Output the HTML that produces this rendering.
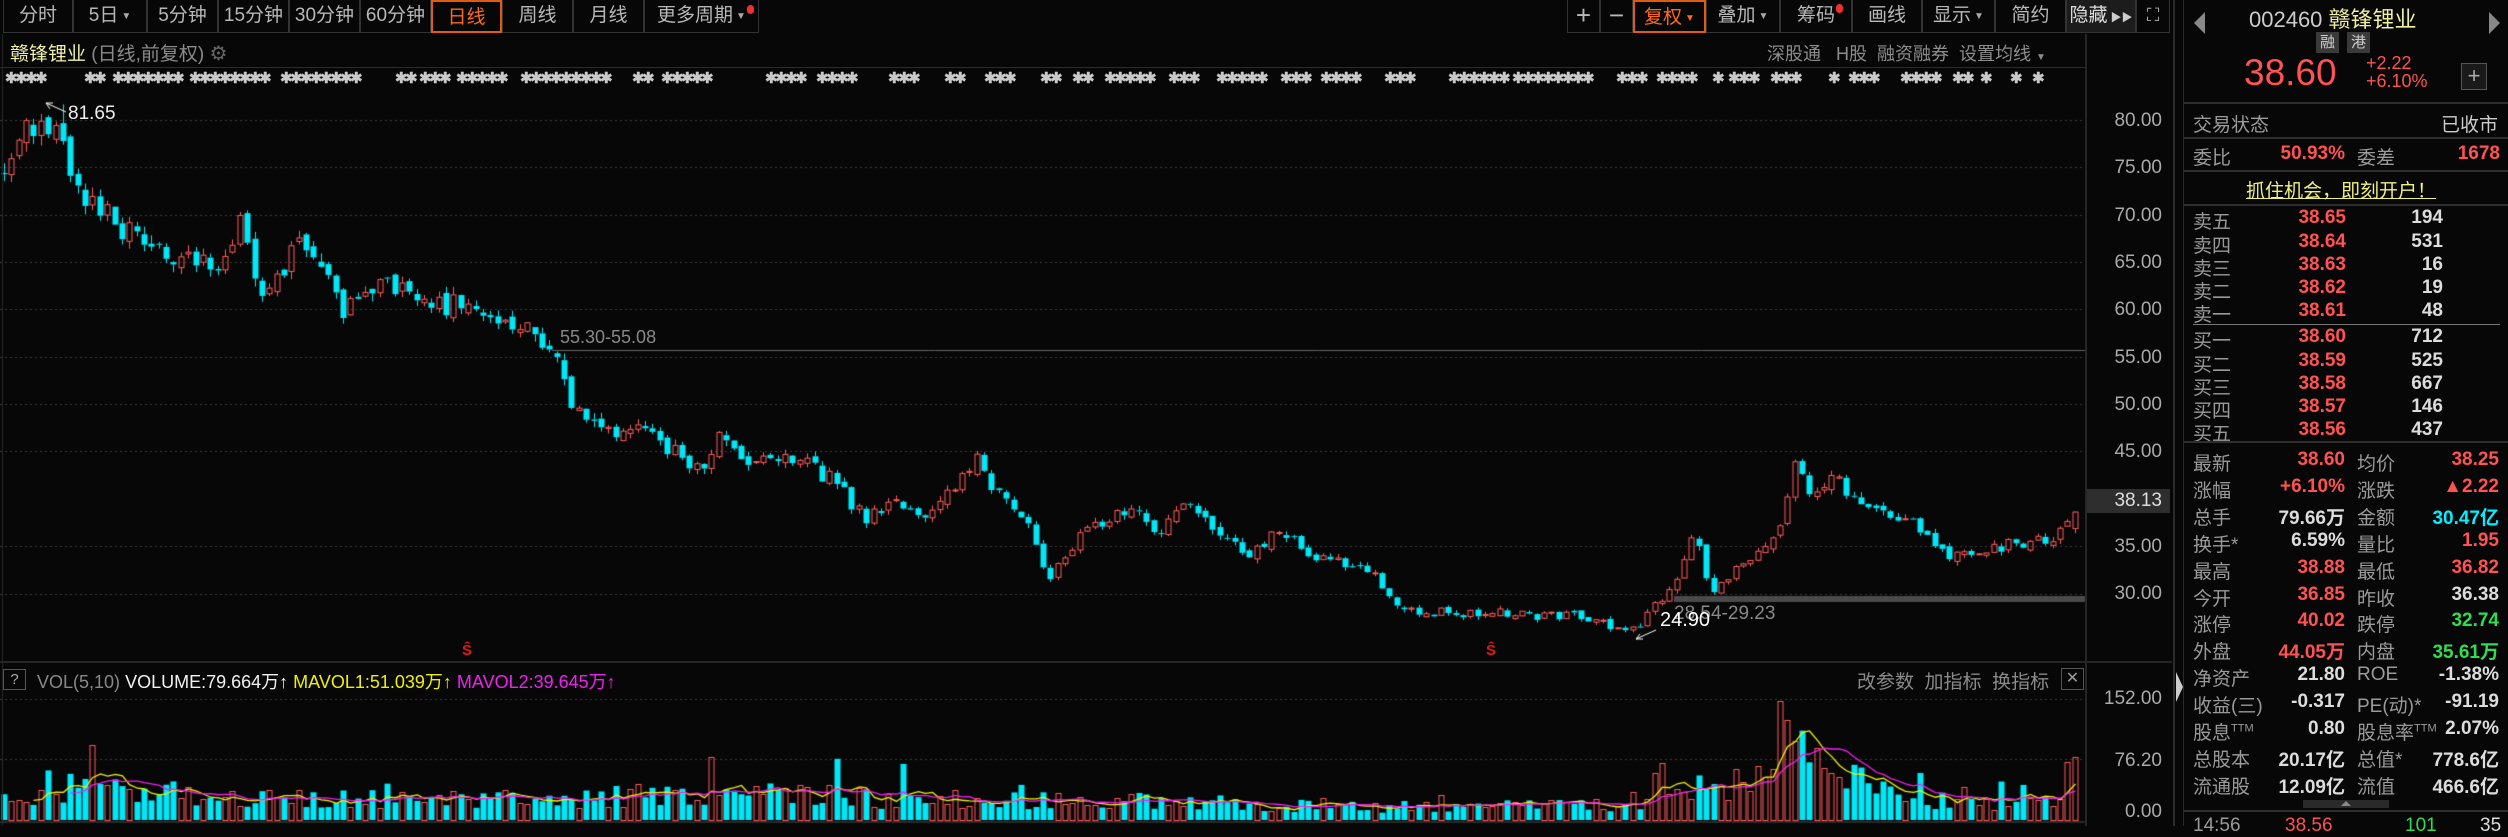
<!DOCTYPE html>
<html><head><meta charset="utf-8">
<style>
*{margin:0;padding:0;box-sizing:border-box}
body{width:2508px;height:826px;background:#070707;overflow:hidden;position:relative;font-family:"Liberation Sans","Noto Sans CJK SC",sans-serif;color:#bbb}
.a{position:absolute;white-space:nowrap}
.tab{position:absolute;top:0;height:33px;border:1px solid #333;border-top:none;font-size:19px;line-height:31px;text-align:center;color:#b8b8b8}
.on{border:2px solid #e05a10;color:#ff6a1a}
.dd{font-size:10px;color:#aaa;margin-left:3px;vertical-align:2px}
.ax{position:absolute;right:346px;font-size:19px;color:#aaa;text-align:right}
.rp{position:absolute;font-size:19px;white-space:nowrap}
.lb{color:#9a9a9a}
.r{color:#ff5252}.w{color:#dcdcdc}.c{color:#00f0ff}.g{color:#30dd50}
.hl{position:absolute;left:2184px;width:324px;height:2px;background:#2e2e2e}
</style></head><body>
<div class="tab" style="left:3px;width:70px">分时</div>
<div class="tab" style="left:73px;width:74px">5日<span class="dd">▼</span></div>
<div class="tab" style="left:147px;width:71px">5分钟</div>
<div class="tab" style="left:218px;width:71px">15分钟</div>
<div class="tab" style="left:289px;width:71px">30分钟</div>
<div class="tab" style="left:360px;width:71px">60分钟</div>
<div class="tab on" style="left:431px;width:71px">日线</div>
<div class="tab" style="left:502px;width:71px">周线</div>
<div class="tab" style="left:573px;width:71px">月线</div>
<div class="tab" style="left:644px;width:115px">更多周期<span class="dd">▼</span></div>
<div class="a" style="left:747px;top:5px;width:7px;height:9px;border-radius:4px;background:#f03030"></div>

<div class="tab" style="left:1567px;width:33px;font-size:26px">+</div>
<div class="tab" style="left:1600px;width:33px;font-size:26px">−</div>
<div class="tab on" style="left:1633px;width:73px">复权<span class="dd" style="color:#ff6a1a">▼</span></div>
<div class="tab" style="left:1706px;width:74px">叠加<span class="dd">▼</span></div>
<div class="tab" style="left:1780px;width:72px">筹码</div>
<div class="a" style="left:1836px;top:4px;width:7px;height:9px;border-radius:4px;background:#f03030"></div>
<div class="tab" style="left:1852px;width:70px">画线</div>
<div class="tab" style="left:1922px;width:73px">显示<span class="dd">▼</span></div>
<div class="tab" style="left:1995px;width:71px">简约</div>
<div class="tab" style="left:2066px;width:70px;background:#1c1c1c;color:#ddd">隐藏<span style="font-size:11px;color:#ccc"> ▶▶</span></div>
<div class="tab" style="left:2136px;width:34px;font-size:18px;color:#aaa">⛶</div>

<div class="a" style="left:10px;top:39px;font-size:19px"><span style="color:#f0f0a8">赣锋锂业</span> <span style="color:#8a8a8a">(日线,前复权)</span> <span style="color:#666;font-size:20px">⚙</span></div>
<div class="a" style="left:1767px;top:40px;font-size:18px;color:#8c8c8c">深股通 &nbsp; H股 &nbsp;融资融券 &nbsp;设置均线 <span style="font-size:10px">▼</span></div>
<div class="a" style="left:0;top:67px;width:2086px;height:1px;background:#2c2c2c"></div>
<div id="stars" class="a" style="left:0;top:69px;height:22px;width:2080px"></div>

<canvas id="cv" width="2090" height="826" class="a" style="left:0;top:0"></canvas>

<div class="a" style="left:2085px;top:34px;width:2px;height:792px;background:#262626"></div>
<div class="a" style="left:0;top:661px;width:2172px;height:2px;background:#262626"></div>
<div class="a" style="left:2173px;top:0;width:2px;height:826px;background:#2a2a2a"></div>
<div class="a" style="left:2183px;top:0;width:1px;height:826px;background:#2a2a2a"></div>
<div class="ax" style="top:110px">80.00</div>
<div class="ax" style="top:157px">75.00</div>
<div class="ax" style="top:205px">70.00</div>
<div class="ax" style="top:252px">65.00</div>
<div class="ax" style="top:299px">60.00</div>
<div class="ax" style="top:347px">55.00</div>
<div class="ax" style="top:394px">50.00</div>
<div class="ax" style="top:441px">45.00</div>
<div class="a" style="left:2087px;top:489px;width:83px;height:24px;background:#2e2e2e"></div>
<div class="ax" style="top:490px;color:#ddd">38.13</div>
<div class="ax" style="top:536px">35.00</div>
<div class="ax" style="top:583px">30.00</div>
<div class="ax" style="top:688px">152.00</div>
<div class="ax" style="top:750px">76.20</div>
<div class="ax" style="top:801px">0.00</div>
<div class="a" style="left:2176px;top:672px;width:0;height:0;border-top:15px solid transparent;border-bottom:15px solid transparent;border-left:7px solid #ccc"></div>

<div class="a" style="left:68px;top:103px;font-size:19px;color:#eee">81.65</div>
<div class="a" style="left:560px;top:327px;font-size:18px;color:#888">55.30-55.08</div>
<div class="a" style="left:1674px;top:603px;font-size:19px;color:#888">28.54-29.23</div>
<div class="a" style="left:1660px;top:609px;font-size:20px;color:#fff">24.90</div>
<div class="a" style="left:462px;top:642px;font-size:15px;font-weight:bold;color:#e01818">Ŝ</div>
<div class="a" style="left:1486px;top:642px;font-size:15px;font-weight:bold;color:#e01818">Ŝ</div>

<div class="a" style="left:3px;top:669px;width:23px;height:21px;border:1px solid #555;font-size:15px;line-height:19px;text-align:center;color:#aaa">?</div>
<div class="a" style="left:37px;top:668px;font-size:18px"><span style="color:#888">VOL(5,10)</span> <span style="color:#f2f2f2">VOLUME:79.664万↑</span> <span style="color:#f0f000">MAVOL1:51.039万↑</span> <span style="color:#f020f0">MAVOL2:39.645万↑</span></div>
<div class="a" style="left:1857px;top:667px;font-size:19px;color:#8a8a8a">改参数 &nbsp;加指标 &nbsp;换指标</div>
<div class="a" style="left:2061px;top:668px;width:23px;height:22px;border:1px solid #555;color:#999;font-size:16px;line-height:20px;text-align:center">✕</div>

<div class="a" style="left:2194px;top:12px;width:0;height:0;border-top:11px solid transparent;border-bottom:11px solid transparent;border-right:11px solid #888"></div>
<div class="a" style="left:2489px;top:12px;width:0;height:0;border-top:11px solid transparent;border-bottom:11px solid transparent;border-left:11px solid #888"></div>
<div class="rp" style="left:2249px;top:2px;font-size:22px;color:#ccc">002460 <span style="color:#f0f0a0">赣锋锂业</span></div>
<div class="rp" style="left:2316px;top:32px;width:23px;height:21px;background:#3a3a3a;color:#ccc;font-size:15px;text-align:center;line-height:21px">融</div>
<div class="rp" style="left:2347px;top:32px;width:23px;height:21px;background:#3a3a3a;color:#ccc;font-size:15px;text-align:center;line-height:21px">港</div>
<div class="rp r" style="left:2244px;top:52px;font-size:37px">38.60</div>
<div class="rp r" style="left:2366px;top:54px;font-size:18px;line-height:18px">+2.22<br>+6.10%</div>
<div class="rp" style="left:2461px;top:63px;width:26px;height:27px;border:1px solid #555;background:#1a1a1a;color:#aaa;font-size:22px;line-height:24px;text-align:center">+</div>
<div class="hl" style="top:102px"></div>
<div class="rp lb" style="left:2193px;top:110px">交易状态</div><div class="rp w" style="right:10px;top:110px;color:#ccc">已收市</div>
<div class="hl" style="top:137px"></div>
<div class="rp lb" style="left:2193px;top:143px">委比</div><div class="rp r" style="right:163px;top:143px;font-weight:bold">50.93%</div>
<div class="rp lb" style="left:2357px;top:143px">委差</div><div class="rp r" style="right:8px;top:143px;font-weight:bold">1678</div>
<div class="hl" style="top:170px"></div>
<div class="rp" style="left:2246px;top:176px;color:#f0f080;text-decoration:underline">抓住机会，即刻开户！</div>
<div class="hl" style="top:204px"></div>
<div id="ob"></div>
<div class="a" style="left:2193px;top:324px;width:307px;height:1px;background:#777"></div>
<div class="hl" style="top:441px"></div>
<div id="st"></div>
<div class="a" style="left:2303px;top:800px;width:86px;height:8px;background:#2a2a2a"></div>
<div class="a" style="left:2341px;top:801px;width:0;height:0;border-left:5px solid transparent;border-right:5px solid transparent;border-bottom:5px solid #888"></div>
<div class="hl" style="top:810px"></div>
<div class="rp lb" style="left:2193px;top:815px">14:56</div><div class="rp r" style="left:2285px;top:815px">38.56</div><div class="rp g" style="left:2405px;top:815px">101</div><div class="rp w" style="left:2480px;top:815px">35</div>

<script>
var ob=[["卖五","38.65","194"],["卖四","38.64","531"],["卖三","38.63","16"],["卖二","38.62","19"],["卖一","38.61","48"]];
var bb=[["买一","38.60","712"],["买二","38.59","525"],["买三","38.58","667"],["买四","38.57","146"],["买五","38.56","437"]];
var h="",ys=[207,231,254,277,300],yb=[326,350,373,396,419];
ob.forEach(function(r,i){h+='<div class="rp lb" style="left:2193px;top:'+ys[i]+'px">'+r[0]+'</div><div class="rp r" style="right:162px;top:'+ys[i]+'px;font-weight:bold">'+r[1]+'</div><div class="rp w" style="right:65px;top:'+ys[i]+'px;font-weight:bold">'+r[2]+'</div>';});
bb.forEach(function(r,i){h+='<div class="rp lb" style="left:2193px;top:'+yb[i]+'px">'+r[0]+'</div><div class="rp r" style="right:162px;top:'+yb[i]+'px;font-weight:bold">'+r[1]+'</div><div class="rp w" style="right:65px;top:'+yb[i]+'px;font-weight:bold">'+r[2]+'</div>';});
document.getElementById("ob").innerHTML=h;
var st=[["最新","38.60","r","均价","38.25","r"],["涨幅","+6.10%","r","涨跌","▲2.22","r"],["总手","79.66万","w","金额","30.47亿","c"],["换手*","6.59%","w","量比","1.95","r"],["最高","38.88","r","最低","36.82","r"],["今开","36.85","r","昨收","36.38","w"],["涨停","40.02","r","跌停","32.74","g"],["外盘","44.05万","r","内盘","35.61万","g"],["净资产","21.80","w","ROE","-1.38%","w"],["收益(三)","-0.317","w","PE(动)*","-91.19","w"],["股息<sup style='font-size:11px'>TTM</sup>","0.80","w","股息率<sup style='font-size:11px'>TTM</sup>","2.07%","w"],["总股本","20.17亿","w","总值*","778.6亿","w"],["流通股","12.09亿","w","流值","466.6亿","w"]];
h="";st.forEach(function(r,i){var y=449+i*26.9;
h+='<div class="rp lb" style="left:2193px;top:'+y+'px">'+r[0]+'</div><div class="rp '+r[2]+'" style="right:163px;top:'+y+'px;font-weight:bold">'+r[1]+'</div><div class="rp lb" style="left:2357px;top:'+y+'px">'+r[3]+'</div><div class="rp '+r[5]+'" style="right:9px;top:'+y+'px;font-weight:bold">'+r[4]+'</div>';});
document.getElementById("st").innerHTML=h;

var seed=7;function rnd(){seed|=0;seed=seed+0x6D2B79F5|0;var t=Math.imul(seed^seed>>>15,1|seed);t=t+Math.imul(t^t>>>7,61|t)^t;return((t^t>>>14)>>>0)/4294967296;}
var sh="",cl=[[5,45],[84,100],[112,176],[189,264],[280,360],[395,408],[419,448],[456,504],[520,552],[560,603],[632,651],[661,704],[765,800],[816,848],[888,912],[944,960],[984,1008],[1040,1056],[1072,1088],[1104,1152],[1168,1192],[1216,1264],[1280,1304],[1320,1360],[1384,1408],[1448,1504],[1512,1592],[1616,1640],[1656,1696],[1712,1720],[1728,1752],[1770,1800],[1828,1836],[1848,1870],[1900,1940],[1952,1968],[1980,1990],[2010,2020],[2032,2040]];
cl.forEach(function(c){for(var x=c[0];x<c[1];x+=10){sh+='<span class="a" style="left:'+x+'px;top:0;font-size:15px;color:#c8c8c8;font-weight:bold">✱</span>';}});
document.getElementById("stars").innerHTML=sh;

var cv=document.getElementById("cv"),g=cv.getContext("2d");
function py(p){return 120+(80-p)*9.47;}
function vy(v){return 820-v*0.796;}
g.strokeStyle="#3a3a3a";g.setLineDash([2,3]);g.lineWidth=1;
[80,75,70,65,60,55,50,45,35,30].forEach(function(p){var y=Math.round(py(p))+.5;g.beginPath();g.moveTo(0,y);g.lineTo(2085,y);g.stroke();});
[152,76.2].forEach(function(v){var y=Math.round(vy(v))+.5;g.beginPath();g.moveTo(0,y);g.lineTo(2085,y);g.stroke();});
g.setLineDash([]);
var wp=[[0,75],[20,78],[48,80],[64,77],[80,71],[112,70],[144,66],[176,66],[224,64],[240,69],[258,61],[270,62],[304,68],[344,60],[368,63],[400,62],[432,60],[464,61],[496,58],[512,59],[544,56],[560,55],[568,51],[600,47],[640,47],[672,45],[704,43],[717,47],[752,44],[800,44],[832,42],[864,38],[896,40],[928,38],[952,41],[976,44],[1000,40],[1024,38],[1048,31],[1072,35],[1104,38],[1136,39],[1160,36],[1184,40],[1216,37],[1248,34],[1280,37],[1312,34],[1376,32],[1400,28.5],[1440,28],[1488,28],[1536,27.5],[1584,27.5],[1632,26],[1648,28],[1670,30],[1680,33],[1693,37],[1712,30],[1744,33],[1776,36],[1795,44],[1808,40],[1832,42],[1872,39],[1920,37],[1952,34],[2000,35],[2032,35.5],[2064,36.5],[2082,38.6]];
function ip(a,x){for(var i=1;i<a.length;i++){if(x<=a[i][0]){var t=(x-a[i-1][0])/(a[i][0]-a[i-1][0]);return a[i-1][1]+t*(a[i][1]-a[i-1][1]);}}return a[a.length-1][1];}
var vp=[[0,35],[100,40],[300,30],[500,28],[700,38],[900,30],[1100,26],[1300,22],[1450,18],[1600,22],[1640,30],[1660,75],[1700,40],[1760,65],[1780,120],[1820,85],[1880,40],[1950,25],[2050,30],[2082,75]];
var N=282,sp=2078/N,prev=75,vols=[];
for(var i=0;i<N;i++){
 var x=4+i*sp,t=ip(wp,x),o=prev+(rnd()-.5)*t*.016,c=t+(rnd()-.5)*t*.04;
 if(i==N-1){o=36.85;c=38.6;}
 var hi=Math.max(o,c)+rnd()*t*.014,lo=Math.min(o,c)-rnd()*t*.014;
 if(i==8){hi=81.65;}
 prev=c;var up=c>=o,col=up?"#ff5a5a":"#00e8f8";
 var xc=Math.round(x)+.5;g.strokeStyle=col;g.fillStyle=col;g.lineWidth=1;
 var yt=py(Math.max(o,c)),yb=py(Math.min(o,c));if(yb-yt<1)yb=yt+1;
 g.beginPath();g.moveTo(xc,py(hi));g.lineTo(xc,yt);g.moveTo(xc,yb);g.lineTo(xc,py(lo));g.stroke();
 if(up)g.strokeRect(xc-2.5,yt,5,yb-yt);else g.fillRect(xc-3,yt,6,yb-yt);
 var v=ip(vp,x)*(.45+rnd()*.9);if(rnd()<.06)v*=2;if(i==N-1)v=79.66;if(Math.abs(x-1780)<6)v=150;
 vols.push([xc,v,up]);
 var y0=vy(v);if(up){g.strokeStyle="#ff5a5a";g.strokeRect(xc-2.5,Math.round(y0)+.5,5,820-Math.round(y0));}else{g.fillStyle="#00e8f8";g.fillRect(xc-3,y0,6,820-y0);}
}
function ma(n,col){g.strokeStyle=col;g.lineWidth=1.3;g.beginPath();for(var i=n-1;i<N;i++){var s=0;for(var k=0;k<n;k++)s+=vols[i-k][1];var y=vy(s/n);if(i==n-1)g.moveTo(vols[i][0],y);else g.lineTo(vols[i][0],y);}g.stroke();}
ma(5,"#f0f000");ma(10,"#f020f0");
g.strokeStyle="#666";g.lineWidth=1;g.beginPath();g.moveTo(552,350.5);g.lineTo(2085,350.5);g.stroke();
g.fillStyle="#4a4a4a";g.fillRect(1674,596,411,6);
g.strokeStyle="#fff";g.beginPath();g.moveTo(46,103);g.lineTo(66,112);g.moveTo(46,103);g.lineTo(53,103);g.moveTo(46,103);g.lineTo(50,109);
g.moveTo(1636,639);g.lineTo(1656,630);g.moveTo(1636,639);g.lineTo(1643,639);g.moveTo(1636,639);g.lineTo(1640,634);g.stroke();
g.strokeStyle="#2a2a2a";g.beginPath();g.moveTo(2.5,34);g.lineTo(2.5,826);g.stroke();
g.fillStyle="#2a2a2a";g.fillRect(0,821,2085,2);
</script>
</body></html>
